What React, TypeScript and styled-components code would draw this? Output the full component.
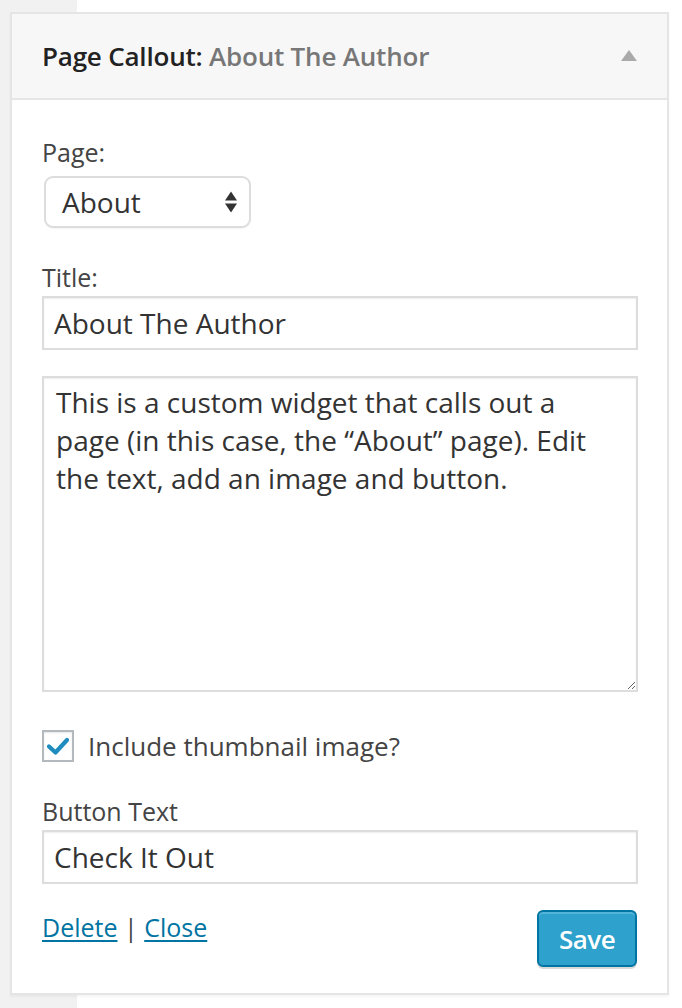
import React from "react";
import styled, { createGlobalStyle } from "styled-components";

const Global = createGlobalStyle`
  html, body { margin: 0; padding: 0; }
  body {
    background: linear-gradient(to right, #f1f1f1 77px, #ffffff 77px);
    font-family: "Open Sans", "Noto Sans", sans-serif;
    color: #444;
    min-height: 1008px;
  }
  #root { padding: 12px 13px 0 10px; }
`;

const Panel = styled.div`
  width: 659px;
  box-sizing: border-box;
  border: 2px solid #e5e5e5;
  background: #fff;
  box-shadow: 0 2px 2px rgba(0, 0, 0, 0.04);
`;

const Header = styled.div`
  display: flex;
  align-items: center;
  justify-content: space-between;
  height: 86px;
  box-sizing: border-box;
  padding: 0 30px 0 30px;
  background: #f7f7f7;
  border-bottom: 2px solid #e5e5e5;
`;

const Title = styled.h3`
  margin: 0;
  font-size: 26px;
  font-weight: 600;
  color: #222;
  letter-spacing: -0.2px;
`;

const Sub = styled.span`
  color: #777;
`;

const Toggle = styled.span`
  width: 0;
  height: 0;
  border-left: 8px solid transparent;
  border-right: 8px solid transparent;
  border-bottom: 11px solid #aaa;
  margin-top: -2px;
`;

const Body = styled.div`
  padding: 36px 29px 26px 30px;
  display: flex;
  flex-direction: column;
`;

const Field = styled.div<{ $gap?: number }>`
  display: flex;
  flex-direction: column;
  margin-bottom: ${(p) => p.$gap ?? 24}px;
`;

const Label = styled.label`
  font-size: 25px;
  line-height: 32px;
  color: #444;
  margin-bottom: 3px;
`;

const SelectBox = styled.div`
  position: relative;
  width: 207px;
  height: 52px;
  box-sizing: border-box;
  margin: 5px 0 0 2px;
  border: 2px solid #ddd;
  border-radius: 9px;
  background: #fff;
  display: flex;
  align-items: center;
  padding-left: 16px;
  font-size: 28px;
  color: #333;
  box-shadow: 0 1px 1px rgba(0,0,0,0.04);
`;

const Arrows = styled.span`
  position: absolute;
  right: 12px;
  top: 50%;
  transform: translateY(-50%);
  display: flex;
  flex-direction: column;
  gap: 3px;
`;

const Up = styled.span`
  width: 0; height: 0;
  border-left: 6px solid transparent;
  border-right: 6px solid transparent;
  border-bottom: 9px solid #333;
`;
const Down = styled(Up)`
  border-bottom: 0;
  border-top: 9px solid #333;
`;

const TextInput = styled.input`
  width: 100%;
  height: 54px;
  box-sizing: border-box;
  border: 2px solid #ddd;
  box-shadow: inset 0 1px 2px rgba(0,0,0,0.07);
  font-family: "Open Sans", "Noto Sans", sans-serif;
  font-size: 28px;
  color: #333;
  padding: 0 10px;
  margin: 0;
  outline: none;
`;

const TextArea = styled.textarea`
  width: 100%;
  height: 316px;
  box-sizing: border-box;
  border: 2px solid #ddd;
  box-shadow: inset 0 1px 2px rgba(0,0,0,0.07);
  font-family: "Open Sans", "Noto Sans", sans-serif;
  font-size: 28px;
  line-height: 38px;
  color: #333;
  padding: 5px 12px;
  margin: 0;
  outline: none;
  resize: vertical;
`;

const CheckRow = styled.label`
  display: flex;
  align-items: center;
  gap: 14px;
  height: 36px;
  font-size: 26px;
  color: #444;
  margin-bottom: 31px;
`;

const Box = styled.span`
  width: 32px;
  height: 32px;
  box-sizing: border-box;
  border: 2px solid #b4b9be;
  background: #fff;
  box-shadow: inset 0 1px 2px rgba(0,0,0,0.1);
  display: flex;
  align-items: center;
  justify-content: center;
`;

const Footer = styled.div`
  display: flex;
  justify-content: space-between;
  align-items: flex-start;
`;

const Links = styled.div`
  font-size: 25px;
  color: #444;
`;

const Link = styled.a`
  color: #0074a2;
  text-decoration: underline;
  text-underline-offset: 3px;
  cursor: pointer;
`;

const SaveButton = styled.button`
  width: 100px;
  height: 57px;
  box-sizing: border-box;
  background: #2ea2cc;
  border: 2px solid #0074a2;
  border-radius: 6px;
  color: #fff;
  font-family: "Open Sans", "Noto Sans", sans-serif;
  font-size: 26px;
  font-weight: 600;
  letter-spacing: -0.5px;
  box-shadow: inset 0 2px 0 rgba(120, 200, 230, 0.5), 0 2px 0 rgba(0,0,0,0.15);
  margin-right: 1px;
  cursor: pointer;
`;

export default function App() {
  return (
    <>
      <Global />
      <Panel>
        <Header>
          <Title>
            Page Callout: <Sub>About The Author</Sub>
          </Title>
          <Toggle />
        </Header>
        <Body>
          <Field $gap={33}>
            <Label>Page:</Label>
            <SelectBox>
              About
              <Arrows>
                <Up />
                <Down />
              </Arrows>
            </SelectBox>
          </Field>
          <Field $gap={26}>
            <Label>Title:</Label>
            <TextInput defaultValue="About The Author" />
          </Field>
          <Field $gap={36}>
            <TextArea defaultValue={"This is a custom widget that calls out a page (in this case, the \u201CAbout\u201D page). Edit the text, add an image and button."} />
          </Field>
          <CheckRow>
            <Box>
              <svg width="22" height="18" viewBox="0 0 22 18">
                <path d="M2 9.5 L8.5 15.5 L20 3" fill="none" stroke="#1e8cbe" strokeWidth="4.2" strokeLinecap="round" strokeLinejoin="round" />
              </svg>
            </Box>
            Include thumbnail image?
          </CheckRow>
          <Field $gap={26}>
            <Label>Button Text</Label>
            <TextInput defaultValue="Check It Out" />
          </Field>
          <Footer>
            <Links>
              <Link>Delete</Link> | <Link>Close</Link>
            </Links>
            <SaveButton>Save</SaveButton>
          </Footer>
        </Body>
      </Panel>
    </>
  );
}
